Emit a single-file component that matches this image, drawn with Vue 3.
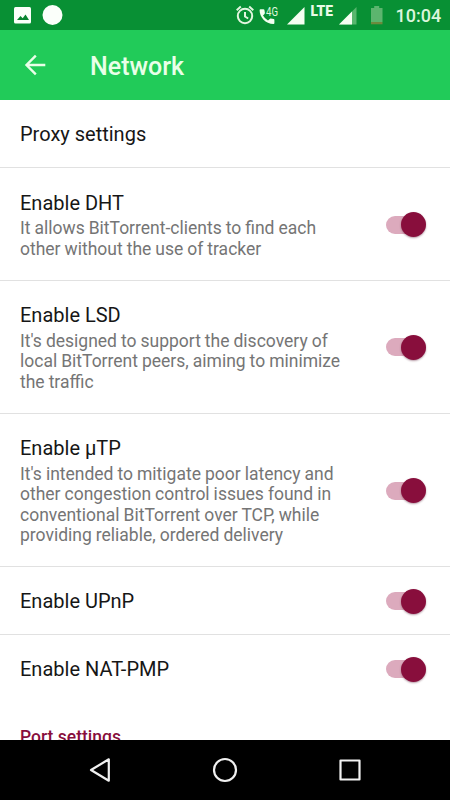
<script setup>
const settings = [
  { title: 'Proxy settings' },
  { title: 'Enable DHT', lines: ['It allows BitTorrent-clients to find each', 'other without the use of tracker'], on: true },
  { title: 'Enable LSD', lines: ["It's designed to support the discovery of", 'local BitTorrent peers, aiming to minimize', 'the traffic'], on: true },
  { title: 'Enable µTP', lines: ["It's intended to mitigate poor latency and", 'other congestion control issues found in', 'conventional BitTorrent over TCP, while', 'providing reliable, ordered delivery'], on: true },
  { title: 'Enable UPnP', on: true },
  { title: 'Enable NAT-PMP', on: true },
]
</script>

<template>
  <div class="screen">
    <header class="status">
      <svg class="status-icons" width="390" height="30" viewBox="0 0 390 30">
        <rect x="14" y="7" width="17" height="16.5" rx="1.5" fill="#fbfffa" />
        <path d="M17 20l3.5-4 2.2 2.2 2.8-3.6 3.5 5.4z" fill="#08852f" />
        <circle cx="52.5" cy="15" r="10" fill="#fbfffa" />
        <g fill="none" stroke="#e3f6df" stroke-width="2">
          <circle cx="245" cy="16" r="7.2" />
          <path d="M245 12v4.500l3.200 2M236.700 10.200l4.100-3.600M253.300 10.200l-4.100-3.600" />
        </g>
        <path d="M260.500 9.200h3q.8 0 .9.800l.5 2.800q.1.600-.4 1.100l-1.500 1.700q1.800 3.200 5 5l1.700-1.700q.5-.5 1.100-.3l2.800.5q.8.200.8.900v3.100q0 .9-.9.900C265.500 24 259.600 17 259.600 10.200q0-1 .9-1z" fill="#f2fff0" />
        <text x="266" y="15.500" class="network-4g" textLength="12" lengthAdjust="spacingAndGlyphs">4G</text>
        <path d="M287 24.500L304.500 7v17.500z" fill="#f5fff2" />
        <text x="310.500" y="16" class="lte" textLength="22.500" lengthAdjust="spacingAndGlyphs">LTE</text>
        <path d="M339 24.500L356.500 7v17.500z" fill="#58b66e" />
        <path d="M339 24.500L352 11.500v13z" fill="#f5fff2" />
        <path d="M371 8h3.200V6h5V8h3.300v14h-11.500z" fill="#5cb56e" />
        <path d="M371 22h11.500v2.300h-11.500z" fill="#6d8a3d" />
      </svg>
      <span class="clock">10:04</span>
    </header>

    <div class="toolbar">
      <svg width="24" height="24" viewBox="0 0 24 24" fill="none" stroke="#e9ffe8" stroke-width="2.400">
        <path d="M21.300 12H3.500M11.800 2.700L2.500 12l9.300 9.300" />
      </svg>
      <h1>Network</h1>
    </div>

    <main>
      <section v-for="item in settings" :key="item.title" class="row" :class="{ detailed: item.lines }">
        <div class="copy">
          <div class="title">{{ item.title }}</div>
          <div v-if="item.lines" class="summary">
            <div v-for="line in item.lines" :key="line">{{ line }}</div>
          </div>
        </div>
        <div v-if="item.on" class="switch"><i class="thumb"></i></div>
      </section>
      <h2>Port settings</h2>
    </main>

    <nav>
      <svg width="450" height="60" viewBox="0 0 450 60" fill="none" stroke="#f0f0f0" stroke-width="2.200" stroke-linejoin="round">
        <path d="M108.800 19.300v21.400L91 30z" />
        <circle cx="225" cy="30" r="11" />
        <rect x="340.500" y="20.500" width="19" height="19" />
      </svg>
    </nav>
  </div>
</template>

<style>
body { margin: 0; }
</style>

<style scoped>
.screen {
  width: 450px;
  height: 800px;
  display: flex;
  flex-direction: column;
  overflow: hidden;
  background: #fff;
  font-family: Roboto, sans-serif;
}
.status {
  height: 30px;
  flex: none;
  display: flex;
  align-items: center;
  background: #089034;
}
.status-icons { flex: none; }
.network-4g { font-size: 12px; font-weight: 400; fill: #dff7dc; }
.lte { font-size: 14px; font-weight: 900; fill: #e9fbe6; }
.clock {
  margin-left: 5.500px;
  padding-top: 2px;
  font-size: 18px;
  line-height: 24px;
  font-weight: 500;
  color: #dcf6dc;
}
.toolbar {
  height: 70px;
  flex: none;
  box-sizing: border-box;
  display: flex;
  align-items: center;
  gap: 42px;
  padding-left: 24px;
  background: #21cb59;
}
h1 {
  margin: 3px 0 0;
  font-size: 25px;
  line-height: 31px;
  font-weight: 500;
  color: #e9ffe8;
}
main {
  flex: 1;
  min-height: 0;
  overflow: hidden;
}
.row {
  display: flex;
  align-items: center;
  justify-content: space-between;
  box-sizing: border-box;
  min-height: 68.200px;
  padding: 0 22.500px 0 20px;
  border-bottom: 1px solid #e1e1e1;
}
.row:last-of-type { border-bottom-color: transparent; }
.detailed ~ .row { padding-top: 1px; }
.row.detailed { padding-top: 22.600px; padding-bottom: 20.400px; }
.title {
  font-size: 20px;
  line-height: 24px;
  color: #161616;
  white-space: nowrap;
}
.summary {
  margin-top: 3.500px;
  font-size: 17.500px;
  line-height: 20.500px;
  word-spacing: -.35px;
  color: #757575;
  white-space: nowrap;
}
.switch {
  height: 26px;
  flex: none;
  display: flex;
  align-items: center;
}
.switch::before {
  content: "";
  width: 30px;
  height: 18px;
  margin-right: -15px;
  border-radius: 9px;
  background: #dcaabd;
}
.thumb {
  width: 25px;
  height: 25px;
  margin-right: 2px;
  border-radius: 50%;
  background: #880e3c;
  box-shadow: 0 1px 2px rgba(70, 0, 30, .4);
}
.detailed .switch { margin-top: -1px; }
h2 {
  margin: 23.500px 0 0 20px;
  font-size: 17.500px;
  line-height: 21px;
  font-weight: 500;
  color: #880e3c;
}
nav { height: 60px; flex: none; background: #000; }
nav svg { display: block; }
</style>
